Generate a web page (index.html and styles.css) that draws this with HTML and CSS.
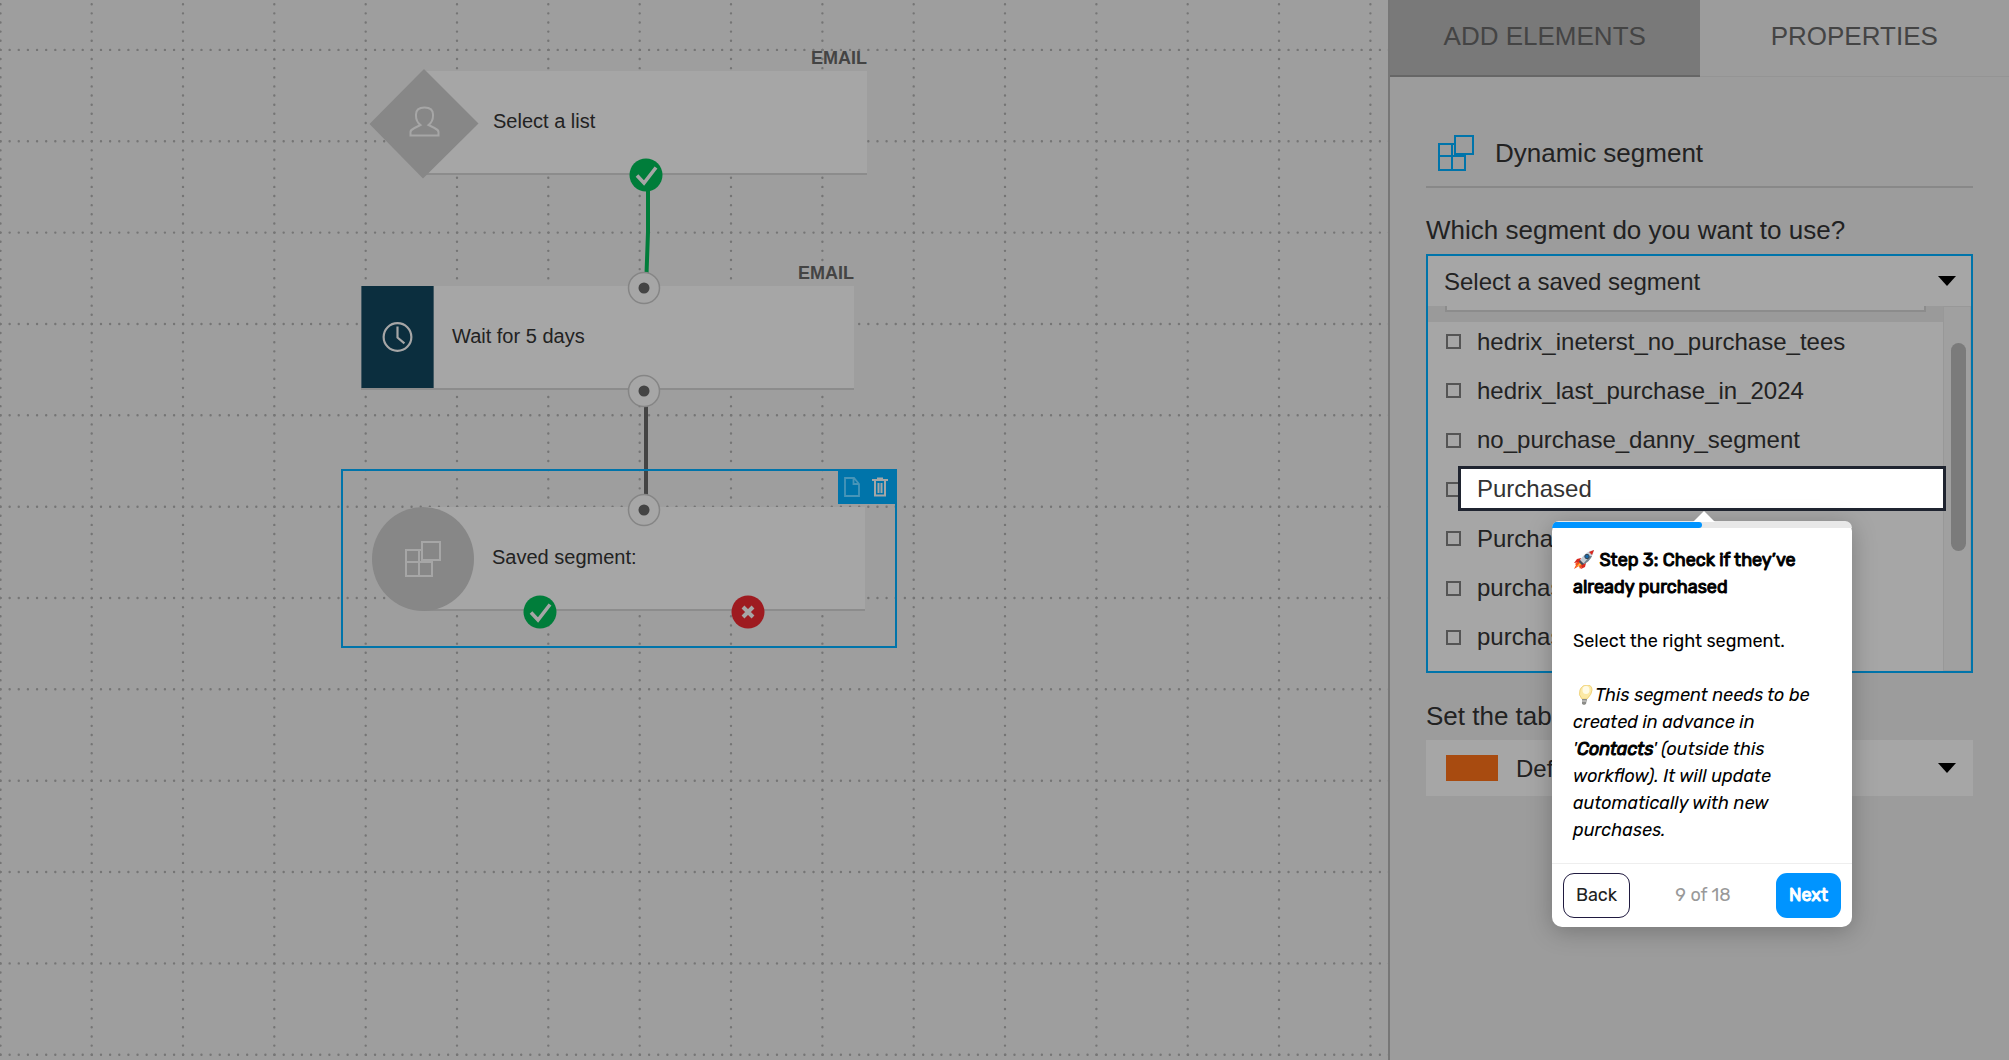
FILE: index.html
```html
<!DOCTYPE html>
<html lang="en">
<head>
<meta charset="utf-8">
<title>Workflow editor</title>
<link rel="stylesheet" href="styles.css">
</head>
<body>
<svg class="defs" aria-hidden="true">
  <symbol id="tick" viewBox="0 0 34 34"><circle cx="17" cy="17" r="16.5" fill="#007d3a"/><path d="M8 17.5l7 7.500L27 9.500" fill="none" stroke="#a6a6a6" stroke-width="3.600"/></symbol>
  <symbol id="cross" viewBox="0 0 34 34"><circle cx="17" cy="17" r="16.5" fill="#9e1b20"/><path d="M12 12l10 10M22 12l-10 10" fill="none" stroke="#a6a6a6" stroke-width="4"/></symbol>
  <symbol id="port" viewBox="0 0 34 34"><circle cx="17" cy="17" r="15.500" fill="#a6a6a6" stroke="#858585" stroke-width="1.500"/><circle cx="17" cy="17" r="5.500" fill="#444"/></symbol>
  <symbol id="blocks" viewBox="0 0 36 36"><path d="M17 9H1v26h26V20M1 21h26M14 9v26M17 1h18v18H17z" fill="none" stroke="currentColor" stroke-width="2"/></symbol>
</svg>

<div class="app">
  <main class="canvas">
    <svg class="grid" aria-hidden="true">
      <path class="dots" d="M0.500 4.200V1100M91.700 4.200V1100M183 4.200V1100M274.300 4.200V1100M365.700 4.200V1100M457 4.200V1100M548.300 4.200V1100M639.700 4.200V1100M731 4.200V1100M822.400 4.200V1100M913.700 4.200V1100M1005 4.200V1100M1096.400 4.200V1100M1187.700 4.200V1100M1279 4.200V1100M1370.400 4.200V1100"/>
      <path class="dots" d="M0.500 49.900H1392M0.500 141.300H1392M0.500 232.600H1392M0.500 324H1392M0.500 415.300H1392M0.500 506.700H1392M0.500 598H1392M0.500 689.300H1392M0.500 780.700H1392M0.500 872H1392M0.500 963.400H1392M0.500 1054.700H1392"/>
      <path d="M648 188V232L646.500 274" fill="none" stroke="#007d3a" stroke-width="4"/>
      <path d="M646 404V496" fill="none" stroke="#444" stroke-width="4"/>
    </svg>

    <section class="node node-list">
      <span class="channel">EMAIL</span>
      <div class="card">
        <svg class="diamond" viewBox="0 0 110 110"><path d="M55 0L109.500 54.500 54 109.500 0.500 55z" fill="#878787"/><path d="M41.500 66.500V63q0-2 4-4l6-3q-4.500-3.500-4.500-9v-1.500q0-7 8.500-7t8.500 7V47q0 5.500-4.500 9l6 3q4 2 4 4v3.500z" fill="none" stroke="#a6a6a6" stroke-width="2"/></svg>
        <span class="name">Select a list</span>
      </div>
    </section>

    <section class="node node-wait">
      <span class="channel">EMAIL</span>
      <div class="card">
        <svg class="clock" viewBox="0 0 73 103"><path d="M0 0h73v103H0z" fill="#0b2e3e"/><circle cx="36.500" cy="51.500" r="14" fill="none" stroke="#a6a6a6" stroke-width="2.200"/><path d="M36.500 41v11l7 6" fill="none" stroke="#a6a6a6" stroke-width="2.200"/></svg>
        <span class="name">Wait for 5 days</span>
      </div>
    </section>

    <section class="selection">
      <div class="tools">
        <button type="button" aria-label="Copy"><svg viewBox="0 0 16 20"><path d="M1 1h9l5 6v12H1zM9.500 1v6H15" fill="none" stroke="#4795b8" stroke-width="1.800"/></svg></button>
        <button type="button" aria-label="Delete"><svg viewBox="0 0 16 20"><path d="M0 3h16M5 1.500h6M3 3v15.500h10V3M6.500 6v10M9.500 6v10" fill="none" stroke="#a6a6a6" stroke-width="2"/></svg></button>
      </div>
    </section>
    <section class="node node-segment">
      <div class="card">
        <span class="disc"><svg><use href="#blocks"/></svg></span>
        <span class="name">Saved segment:</span>
      </div>
    </section>

    <svg class="pin pin-a"><use href="#tick"/></svg>
    <svg class="pin pin-b"><use href="#port"/></svg>
    <svg class="pin pin-c"><use href="#port"/></svg>
    <svg class="pin pin-d"><use href="#port"/></svg>
    <svg class="pin pin-e"><use href="#tick"/></svg>
    <svg class="pin pin-f"><use href="#cross"/></svg>
  </main>

  <aside class="panel">
    <nav class="tabs">
      <button type="button" class="tab">ADD ELEMENTS</button>
      <button type="button" class="tab active">PROPERTIES</button>
    </nav>
    <div class="body">
      <h2 class="title"><svg><use href="#blocks"/></svg>Dynamic segment</h2>

      <label class="caption" for="segment">Which segment do you want to use?</label>
      <div class="dropdown">
        <div class="field">
          <select id="segment"><option>Select a saved segment</option></select>
          <svg class="caret" viewBox="0 0 18 10"><path d="M0 0h18l-9 10z"/></svg>
        </div>
        <div class="menu">
          <div class="options">
            <div class="search"></div>
            <div class="rows">
              <label class="row"><input type="checkbox">hedrix_ineterst_no_purchase_tees</label>
              <label class="row"><input type="checkbox">hedrix_last_purchase_in_2024</label>
              <label class="row"><input type="checkbox">no_purchase_danny_segment</label>
              <div class="row">
                <input type="checkbox" id="purchased">
                <label class="spotlight" for="purchased">Purchased</label>
                <div class="tour" role="dialog" aria-label="Tour step">
                  <div class="progress"><span class="bar"></span></div>
                  <div class="copy">
                    <p><svg class="emoji" viewBox="0 0 22 20"><path d="M2 14l5-4 4 4-4 5-1-3-5 3 2-4z" fill="#f6531c"/><path d="M3 17l4-4 1 2z" fill="#ffc23c"/><path d="M8 8L4 9 1 13l6-1zM13 13l-1 4-4 2 1-5z" fill="#d9281f"/><path d="M21 0q-8 1-14 10l4 4Q20 8 21 0z" fill="#c5ced6"/><path d="M21 0l-5 2 3 3z" fill="#d9281f"/><path d="M10 14l7-8 2 0q-2 5-8 8z" fill="#72808c"/><circle cx="14" cy="6.500" r="2.200" fill="#1769aa" stroke="#354452"/><path d="M7 10l4 4-2 1-3-3z" fill="#425160"/></svg> <b>Step 3: Check if they’ve<br>already purchased</b></p>
                    <p>Select the right segment.</p>
                    <p><i><svg class="emoji" viewBox="0 0 22 20"><path d="M9 14Q5 10 7 5q2-5 7-5t5 5q0 4-5 9z" fill="#fce9a4" stroke="#efd27a"/><ellipse cx="13" cy="5" rx="3.500" ry="4" fill="#fffbe6"/><path d="M9 14l5 0-1 5-2 1-2-1z" fill="#8c8c88"/><path d="M9 16h4" stroke="#ddd"/></svg>This segment needs to be<br>created in advance in<br>'<b>Contacts</b>' (outside this<br>workflow). It will update<br>automatically with new<br>purchases.</i></p>
                  </div>
                  <footer>
                    <button type="button" class="back">Back</button>
                    <span>9 of 18</span>
                    <button type="button" class="next">Next</button>
                  </footer>
                </div>
              </div>
              <label class="row"><input type="checkbox">Purchased_2</label>
              <label class="row"><input type="checkbox">purchase</label>
              <label class="row"><input type="checkbox">purchase</label>
            </div>
          </div>
          <div class="track"><span class="thumb"></span></div>
        </div>
      </div>

      <label class="caption" for="tab-color">Set the tab</label>
      <div class="field color">
        <span class="swatch"></span>
        <select id="tab-color"><option>Default</option></select>
        <svg class="caret" viewBox="0 0 18 10"><path d="M0 0h18l-9 10z"/></svg>
      </div>
    </div>
  </aside>
</div>
</body>
</html>
```
FILE: styles.css
```css
* { box-sizing: border-box; }
body {
  margin: 0;
  background: #9e9e9e;
  color: #222;
  font-family: "Liberation Sans", Arial, sans-serif;
}
button, select { font: inherit; color: inherit; }
.defs { position: absolute; width: 0; height: 0; }
.app { display: flex; min-height: 100vh; }

/* Canvas */
.canvas { position: relative; flex: 1; min-width: 0; overflow: hidden; }
.grid { position: absolute; inset: 0; width: 100%; height: 100%; }
.dots {
  fill: none;
  stroke: #757575;
  stroke-width: 2.4;
  stroke-linecap: round;
  stroke-dasharray: 0 9.135;
}
.node { position: absolute; font-size: 20px; }
.card {
  display: flex;
  align-items: center;
  height: 104px;
  background: #a6a6a6;
  border-bottom: 2px solid #8c8c8c;
}
.channel {
  position: absolute;
  right: 0;
  bottom: 100%;
  margin-bottom: 2px;
  font-size: 18px;
  line-height: 22px;
  font-weight: bold;
  color: #444;
}
.name { line-height: 24px; padding-bottom: 2px; }
.node-list { left: 424px; top: 71px; width: 443px; }
.node-wait { left: 361px; top: 286px; width: 493px; }
.node-segment { left: 424px; top: 507px; width: 441px; }
.diamond { width: 110px; height: 110px; flex: none; margin: 4px 14px 0 -55px; }
.clock { width: 73px; height: 102px; flex: none; margin-right: 18px; }
.disc {
  display: grid;
  place-items: center;
  flex: none;
  width: 102px;
  height: 104px;
  margin: 2px 18px 0 -52px;
  border-radius: 50%;
  background: #878787;
  color: #a6a6a6;
}
.disc svg { width: 36px; height: 36px; }
.selection {
  position: absolute;
  left: 341px;
  top: 469px;
  width: 556px;
  height: 179px;
  border: 2px solid #0074aa;
}
.tools {
  display: flex;
  justify-content: space-around;
  align-items: center;
  width: 58px;
  height: 34px;
  margin: -1px -1px 0 auto;
  padding-right: 2px;
  background: #0074aa;
}
.tools button { display: flex; padding: 0; border: 0; background: none; }
.tools svg { width: 16px; height: 20px; }
.pin { position: absolute; width: 34px; height: 34px; }
.pin-a { left: 629px; top: 158px; }
.pin-b { left: 627px; top: 271px; }
.pin-c { left: 627px; top: 374px; }
.pin-d { left: 627px; top: 493px; }
.pin-e { left: 523px; top: 595px; }
.pin-f { left: 731px; top: 595px; }

/* Side panel */
.panel { width: 621px; border-left: 2px solid #777; background: #9c9c9c; }
.tabs { display: flex; height: 77px; }
.tab {
  flex: 1;
  padding: 0 0 3px;
  border: 0;
  border-bottom: 1px solid #949494;
  background: none;
  font-size: 26px;
  color: #444;
}
.tab:not(.active) { padding-bottom: 2px; background: #797979; border-bottom: 2px solid #666; }
.body { padding: 45px 36px 0; }
.title {
  display: flex;
  align-items: center;
  gap: 21px;
  height: 66px;
  margin: 0 0 24px;
  padding: 0 0 2px 12px;
  border-bottom: 2px solid #888;
  font-size: 26px;
  font-weight: normal;
}
.title svg { width: 36px; height: 36px; color: #0074aa; }
.caption { display: block; height: 42px; font-size: 26px; line-height: 36px; }
.dropdown { margin-bottom: 25px; border: 2px solid #0074aa; }
.field {
  display: flex;
  align-items: center;
  height: 50px;
  padding: 0 15px 0 16px;
  background: #a6a6a6;
  font-size: 24px;
}
.field select { flex: 1; appearance: none; padding: 0; border: 0; background: none; }
.caret { width: 18px; height: 10px; }
.menu { display: flex; height: 365px; background: #a6a6a6; }
.options { flex: 1; }
.search { height: 16px; padding: 0 17px; background: #9a9a9a; }
.search::before {
  content: "";
  display: block;
  height: 4px;
  background: #a6a6a6;
  border: 2px solid #8c8c8c;
  border-top: 0;
}
.rows { display: grid; grid-template-rows: repeat(7, 1fr); height: 345px; margin-top: -5px; }
.row { position: relative; display: flex; align-items: center; gap: 16px; padding-left: 18px; font-size: 24px; }
.row input { appearance: none; width: 15px; height: 15px; margin: 0; border: 2px solid #555; }
.track { width: 28px; padding: 36px 5px 0 7px; border: 1px solid #989898; background: #a0a0a0; }
.thumb { display: block; width: 15px; height: 208px; border-radius: 8px; background: #7b7b7b; }
.field.color { height: 56px; padding: 0 17px 0 20px; }
.swatch { width: 52px; height: 26px; margin-right: 18px; background: #a84b10; }

/* Guided tour */
.spotlight {
  position: absolute;
  left: 30px;
  top: 1px;
  width: 488px;
  height: 45px;
  padding-left: 16px;
  border: 3px solid #1f2430;
  background: #fff;
  line-height: 40px;
  color: #333;
}
.tour {
  position: absolute;
  z-index: 2;
  left: 124px;
  top: 56px;
  width: 300px;
  border-radius: 10px;
  background: #fff;
  box-shadow: 0 4px 24px rgba(0, 0, 0, 0.25);
  font-family: Rubik, Roboto, sans-serif;
  font-size: 18px;
  line-height: 27px;
  color: #000;
}
.tour b, .next { font-weight: 400; -webkit-text-stroke: 1px currentColor; }
.tour::before {
  content: "";
  position: absolute;
  left: 141px;
  top: -10px;
  border: 11px solid transparent;
  border-top: 0;
  border-bottom-color: #fff;
}
.progress { height: 7px; padding-top: 1px; border-radius: 10px 10px 0 0; background: #e8e8e8; overflow: hidden; }
.bar { display: block; width: 50%; height: 6px; border-radius: 0 3px 3px 0; background: #0094ff; }
.copy { padding: 19px 20px 19px 21px; border-bottom: 1px solid #eee; }
.copy p { margin: 0 0 27px; white-space: nowrap; }
.copy p:last-child { margin: 0; }
.emoji { width: 22px; height: 20px; vertical-align: -4px; }
footer { display: flex; align-items: center; justify-content: space-between; height: 63px; padding: 0 11px; color: #999; }
footer button { height: 45px; padding: 0; border-radius: 11px; }
.back { width: 67px; border: 1px solid #201a40; background: #fff; color: #222; }
.next { width: 65px; border: 0; background: #0094ff; color: #fff; }
```
